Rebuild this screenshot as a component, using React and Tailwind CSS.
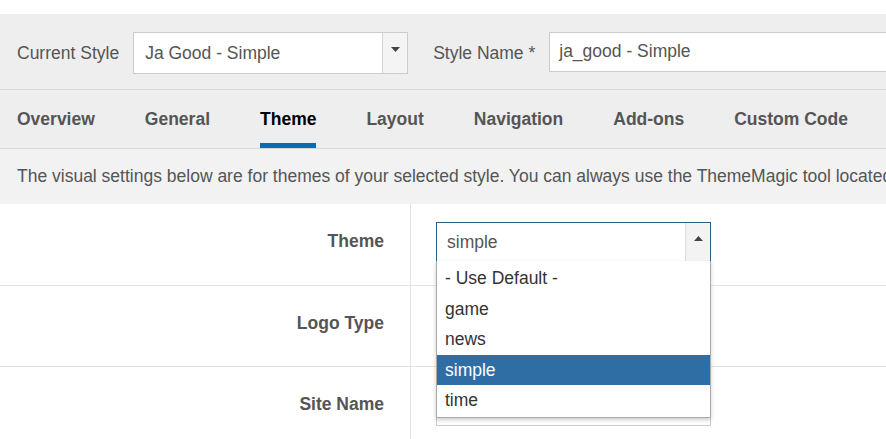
import React from "react";

const font = { fontFamily: '"Liberation Sans", Arial, sans-serif' };

function Caret({ up }) {
  return (
    <svg width="9" height="5" viewBox="0 0 9 5" className="block">
      {up ? <path d="M0 5 L4.5 0 L9 5 Z" fill="#444" /> : <path d="M0 0 L4.5 5 L9 0 Z" fill="#444" />}
    </svg>
  );
}

export default function App() {
  const tabs = ["Overview", "General", "Theme", "Layout", "Navigation", "Add-ons", "Custom Code"];
  const options = ["- Use Default -", "game", "news", "simple", "time"];
  return (
    <div className="w-[886px] h-[439px] overflow-hidden bg-white text-[17.5px] text-[#555]" style={font}>
      <div className="h-[14px] bg-white" />
      {/* toolbar */}
      <div className="h-[76px] bg-[#eeeeee] border-b border-[#d8d8d8] flex items-center pl-[17px] whitespace-nowrap">
        <span className="mt-[3px] shrink-0">Current Style</span>
        <div className="ml-[14px] w-[275px] shrink-0 h-[42px] mt-[2px] bg-white border border-[#cccccc] flex items-stretch">
          <div className="flex-1 flex items-center pl-[11px] mt-[1px]">Ja Good - Simple</div>
          <div className="w-[25px] border-l border-[#d5d5d5] bg-[#f4f4f4] flex justify-center pt-[14px]">
            <Caret />
          </div>
        </div>
        <span className="ml-[25px] mt-[3px] shrink-0">Style Name *</span>
        <div className="ml-[14px] w-[400px] shrink-0 h-[40px] bg-white border border-[#cccccc] flex items-center pl-[9px]">
          ja_good - Simple
        </div>
      </div>
      {/* tabs */}
      <div className="h-[59px] bg-[#eeeeee] border-b border-[#d8d8d8] flex items-stretch pl-[17px] gap-[50px] whitespace-nowrap">
        {tabs.map((t) => (
          <div key={t} className="relative flex items-center font-bold shrink-0">
            <span className={t === "Theme" ? "text-black mt-[1px]" : "text-[#555] mt-[1px]"}>{t}</span>
            {t === "Theme" && <div className="absolute left-0 right-0 bottom-0 h-[5px] bg-[#0a6db1]" />}
          </div>
        ))}
      </div>
      {/* info */}
      <div className="h-[55px] bg-[#f2f2f2] flex items-center pl-[17px] whitespace-nowrap overflow-hidden">
        The visual settings below are for themes of your selected style. You can always use the ThemeMagic tool located
      </div>
      {/* form */}
      <div className="grid grid-cols-[410px_1fr]">
        <div className="h-[82px] border-b border-[#e3e3e3] flex items-center justify-end pr-[26px] font-bold pb-[6px]">Theme</div>
        <div className="h-[82px] border-b border-l border-[#e3e3e3] pl-[25px] pt-[18px] relative">
          <div className="w-[275px] h-[40px] border border-[#2d5f85] bg-white flex items-stretch">
            <div className="flex-1 flex items-center pl-[10px] text-[#555]">simple</div>
            <div className="w-[25px] border-l border-[#dddddd] bg-[#f3f3f3] flex justify-center pt-[13px]">
              <Caret up />
            </div>
          </div>
          <div className="absolute left-[25px] top-[57px] z-10 w-[275px] bg-white border border-[#aaaaaa] border-t-0 shadow-[0_2px_4px_rgba(0,0,0,0.2)] text-[#333] pt-[2px] pb-[1px]">
            {options.map((o) => (
              <div
                key={o}
                className={
                  o === "simple"
                    ? "h-[30.5px] flex items-center pl-[8px] bg-[#2f6ea5] text-white"
                    : "h-[30.5px] flex items-center pl-[8px]"
                }
              >
                {o}
              </div>
            ))}
          </div>
        </div>
        <div className="h-[81px] border-b border-[#e3e3e3] flex items-center justify-end pr-[26px] font-bold pb-[6px]">Logo Type</div>
        <div className="h-[81px] border-b border-l border-[#e3e3e3] pl-[25px] flex items-center">
          <div className="w-[275px] h-[40px] border border-[#cccccc] bg-white" />
        </div>
        <div className="h-[81px] flex items-center justify-end pr-[26px] font-bold pb-[7px]">Site Name</div>
        <div className="h-[81px] border-l border-[#e3e3e3] pl-[25px] pt-[19px]">
          <div className="w-[275px] h-[40px] border border-[#cccccc] bg-white" />
        </div>
      </div>
    </div>
  );
}
